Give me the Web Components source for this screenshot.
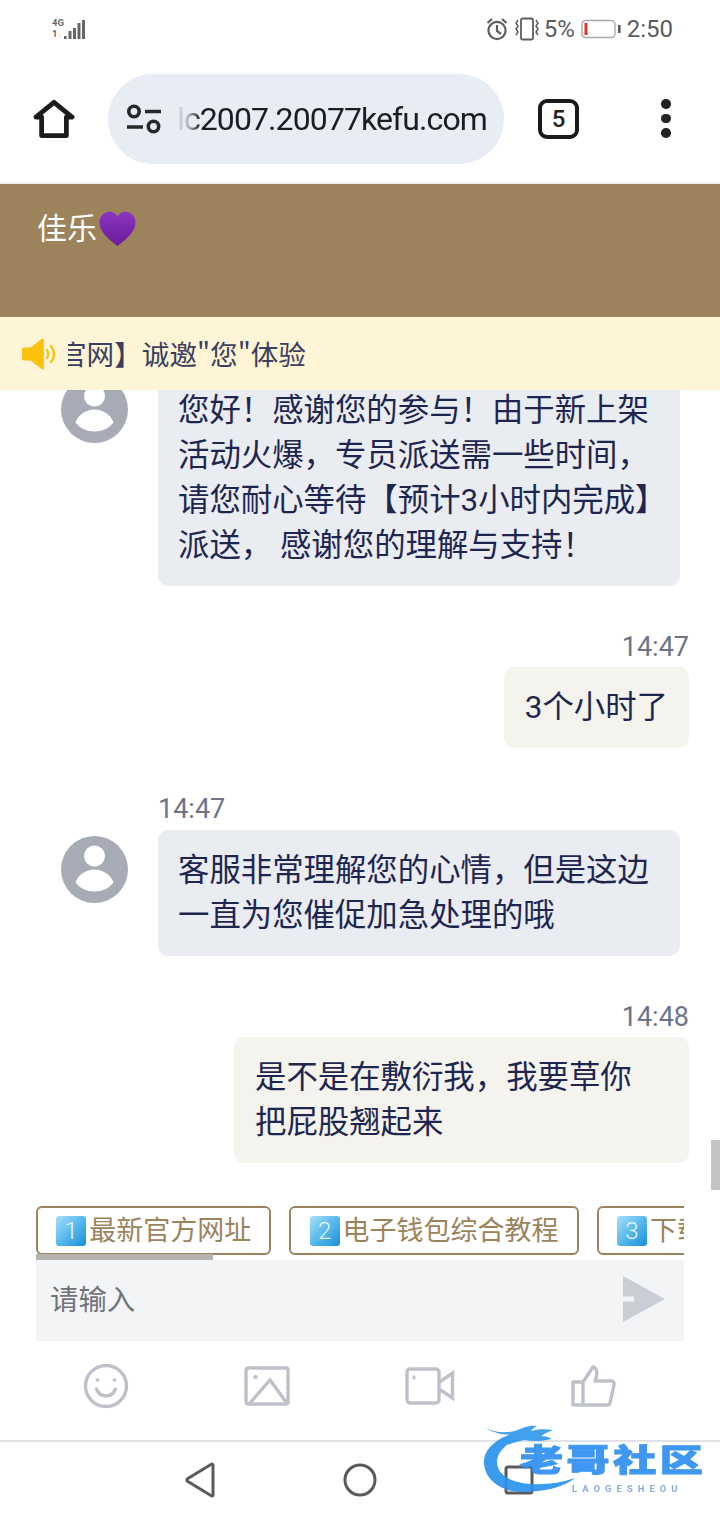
<!DOCTYPE html>
<html lang="zh">
<head>
<meta charset="utf-8">
<title>客服</title>
<style>
  html, body { margin: 0; padding: 0; background: #fff; }
  body {
    width: 720px;
    height: 1520px;
    overflow: hidden;
    position: relative;
    display: flex;
    flex-direction: column;
    font-family: Roboto, "Noto Sans CJK SC", sans-serif;
  }
</style>
</head>
<body>
  <phone-status></phone-status>
  <browser-bar url="lc2007.20077kefu.com" tabs="5"></browser-bar>
  <chat-header name="佳乐"></chat-header>
  <notice-bar text="官网】诚邀&quot;您&quot;体验"></notice-bar>
  <message-list>
    <chat-message side="left" class="first">您好！感谢您的参与！由于新上架活动火爆，专员派送需一些时间，请您耐心等待【预计3小时内完成】派送， 感谢您的理解与支持！</chat-message>
    <chat-message side="right" time="14:47">3个小时了</chat-message>
    <chat-message side="left" time="14:47">客服非常理解您的心情，但是这边一直为您催促加急处理的哦</chat-message>
    <chat-message side="right" time="14:48" wide>是不是在敷衍我，我要草你<br>把屁股翘起来</chat-message>
  </message-list>
  <quick-tray>
    <quick-chip num="1">最新官方网址</quick-chip>
    <quick-chip num="2">电子钱包综合教程</quick-chip>
    <quick-chip num="3">下载教程</quick-chip>
  </quick-tray>
  <chat-input placeholder="请输入"></chat-input>
  <chat-tools></chat-tools>
  <nav-keys></nav-keys>
  <site-mark></site-mark>

<script>
class PhoneStatus extends HTMLElement {
    constructor() {
        super();
        this.attachShadow({ mode: 'open' });
        this.shadowRoot.innerHTML = `
        <style>
        :host {
            display: flex;
            flex: 0 0 58px;
            height: 58px;
            align-items: center;
            justify-content: space-between;
            box-sizing: border-box;
            padding: 0 47px 0 52px;
            color: #5c5c5c;
            font-family: Roboto, sans-serif;
        }
        .signal { display: flex; align-items: flex-end; gap: 0; height: 22px; margin-bottom: 2px; }
        .net { display: flex; flex-direction: column; width: 12px; font-size: 9.5px; line-height: 11px; font-weight: 700; color: #666; }
        .right { display: flex; align-items: center; height: 26px; font-size: 24px; }
        svg { display: block; }
        .pct { margin: 0 6px 0 5px; font-size: 24px; }
        .time { margin-left: 6px; }
        </style>
        <div class="signal">
            <div class="net"><span>4G</span><span>1<span style="opacity:.3">↓</span></span></div>
            <svg width="21" height="20" viewBox="0 0 21 20" fill="#666">
                <rect x="0" y="17" width="2.6" height="3"/>
                <rect x="4.500" y="12" width="3" height="8"/>
                <rect x="9" y="9" width="3" height="11"/>
                <rect x="13.500" y="4" width="3" height="16"/>
                <rect x="18" y="1" width="3" height="19"/>
            </svg>
        </div>
        <div class="right">
            <svg width="22" height="24" viewBox="0 0 22 24" fill="none" stroke="#5c5c5c" stroke-width="2.2">
                <circle cx="11" cy="13.500" r="8.600"/>
                <path d="M11 8v6l4 3M1.500 6 6 2M20.500 6 16 2"/>
            </svg>
            <svg width="24" height="26" viewBox="0 0 24 26" fill="none" stroke="#5c5c5c" stroke-width="1.800" style="margin-left:7px">
                <rect x="6" y="2.500" width="12" height="21" rx="1.500"/>
                <path d="M3 4 1 7l2 3-2 3 2 3-2 3M21 4l2 3-2 3 2 3-2 3 2 3" stroke-width="1.500"/>
            </svg>
            <span class="pct">5%</span>
            <svg width="40" height="20" viewBox="0 0 40 20" fill="none">
                <rect x="1" y="1.500" width="33" height="17" rx="3.500" stroke="#a9a9a9" stroke-width="1.400"/>
                <rect x="3.500" y="4" width="3" height="12" fill="#d8352c"/>
                <rect x="37" y="6" width="2.600" height="8" fill="#5c5c5c"/>
            </svg>
            <span class="time">2:50</span>
        </div>
        `;
    }
}

class BrowserBar extends HTMLElement {
    constructor() {
        super();
        this.attachShadow({ mode: 'open' });
        this.shadowRoot.innerHTML = `
        <style>
        :host {
            display: flex;
            flex: 0 0 126px;
            height: 126px;
            box-sizing: border-box;
            align-items: flex-start;
            padding: 16px 0 0 33px;
            border-bottom: 2px solid #f1f1f1;
            font-family: Roboto, sans-serif;
        }
        svg { display: block; }
        .home { margin: 25px 33px 0 0; }
        .pill {
            display: flex;
            align-items: center;
            width: 396px;
            height: 90px;
            border-radius: 45px;
            background: #e8ecf4;
            box-sizing: border-box;
            padding-left: 18px;
        }
        .url {
            width: 309px;
            margin-left: 16px;
            overflow: hidden;
            direction: rtl;
            font-size: 32px;
            letter-spacing: -0.9px;
            white-space: nowrap;
            color: #1d1d1f;
            -webkit-mask-image: linear-gradient(90deg, rgba(0,0,0,.1) 0, rgba(0,0,0,.25) 10px, #000 22px);
            mask-image: linear-gradient(90deg, rgba(0,0,0,.1) 0, rgba(0,0,0,.25) 10px, #000 22px);
        }
        .tabs {
            box-sizing: border-box;
            width: 41px;
            height: 40px;
            margin: 25px 0 0 34px;
            border: 4.500px solid #1a1a1a;
            border-radius: 9px;
            display: flex;
            align-items: center;
            justify-content: center;
            font-size: 24px;
            font-weight: 500;
            color: #222;
        }
        .more { margin: 25px 0 0 82px; display: flex; flex-direction: column; gap: 5px; }
        .more i { width: 9.500px; height: 9.500px; border-radius: 50%; background: #222; display: block; }
        </style>
        <svg class="home" width="42" height="40" viewBox="0 0 44 42" fill="none" stroke="#1c1c1c" stroke-width="5" stroke-linejoin="round">
            <path d="M9 38.500V19H3L22 3.500 41 19h-6v19.500z"/>
        </svg>
        <div class="pill">
            <svg width="36" height="30" viewBox="0 0 36 30" fill="none" stroke="#26282c" stroke-width="3.600">
                <circle cx="8" cy="7.500" r="5.200"/>
                <path d="M19 7.500h16M1 23h16"/>
                <circle cx="27.500" cy="22.500" r="5.200"/>
            </svg>
            <div class="url"><bdi>${this.getAttribute('url')}</bdi></div>
        </div>
        <div class="tabs">${this.getAttribute('tabs')}</div>
        <div class="more"><i></i><i></i><i></i></div>
        `;
    }
}

class ChatHeader extends HTMLElement {
    constructor() {
        super();
        this.attachShadow({ mode: 'open' });
        this.shadowRoot.innerHTML = `
        <style>
        :host {
            display: flex;
            flex: 0 0 133px;
            height: 133px;
            box-sizing: border-box;
            background: #9c835b;
            padding: 26px 0 0 37px;
            align-items: flex-start;
            color: #fff;
            font: 30px/38px Roboto, "Noto Sans CJK SC", sans-serif;
        }
        svg { display: block; margin: 1px 0 0 2px; }
        </style>
        <span>${this.getAttribute('name')}</span>
        <svg width="37" height="36" viewBox="0 0 37 36">
            <defs><linearGradient id="h" x1="0" y1="0" x2="0" y2="1"><stop offset="0" stop-color="#8a35c0"/><stop offset="1" stop-color="#6a1b9a"/></linearGradient></defs>
            <path d="M18.500 35C8 27 .5 20 .5 11.500 .5 5 5.300 .8 10.600 .8c3.400 0 6.300 1.700 7.900 4.700C20.100 2.500 23 .8 26.400 .8 31.700 .8 36.500 5 36.500 11.500 36.500 20 29 27 18.500 35z" fill="url(#h)"/>
        </svg>
        `;
    }
}

class NoticeBar extends HTMLElement {
    constructor() {
        super();
        this.attachShadow({ mode: 'open' });
        this.shadowRoot.innerHTML = `
        <style>
        :host {
            display: flex;
            flex: 0 0 73px;
            height: 73px;
            align-items: center;
            box-sizing: border-box;
            padding-left: 22px;
            background: #fef5d6;
            position: relative;
            z-index: 1;
        }
        svg { display: block; flex: none; }
        .track { margin: 0 0 2px 9px; overflow: hidden; flex: 1; }
        .text {
            display: block;
            margin-left: -9px;
            white-space: nowrap;
            color: #3b3e5e;
            font: 27.6px/40px "Noto Sans CJK SC", sans-serif;
        }
        </style>
        <svg width="37" height="32" viewBox="0 0 37 32" fill="#fbc20d">
            <path d="M0 11.500C0 10 1 9.500 2 9.500h6.500L20 .8c.8-.6 1.800 0 1.800 1V30.200c0 1-1 1.600-1.800 1L8.500 22.500H2C1 22.500 0 22 0 20.500z"/>
            <path d="M25 10.500c3 3 3 8 0 11l-1.300-1.500c2-2.300 2-5.700 0-8z"/>
            <path d="M29 6.500c5.500 5 5.500 14 0 19l-1.500-1.500c4.300-4.200 4.300-11.800 0-16z"/>
        </svg>
        <div class="track"><span class="text">${this.getAttribute('text')}</span></div>
        `;
    }
}

class MessageList extends HTMLElement {
    constructor() {
        super();
        this.attachShadow({ mode: 'open' });
        this.shadowRoot.innerHTML = `
        <style>
        :host {
            display: block;
            flex: 0 0 800px;
            height: 800px;
            overflow: hidden;
            position: relative;
        }
        .rows { display: flex; flex-direction: column; gap: 45px; margin-top: -20px; }
        .thumb {
            position: absolute;
            right: 0;
            top: 750px;
            width: 9px;
            height: 50px;
            background: #c4c4c4;
        }
        </style>
        <div class="rows"><slot></slot></div>
        <div class="thumb"></div>
        `;
    }
}

class ChatMessage extends HTMLElement {
    constructor() {
        super();
        this.attachShadow({ mode: 'open' });
        const side = this.getAttribute('side');
        const time = this.getAttribute('time');
        this.shadowRoot.innerHTML = `
        <style>
        :host {
            display: flex;
            font: 31.4px/45px Roboto, "Noto Sans CJK SC", sans-serif;
            color: #1e2650;
        }
        :host([side="left"]) { padding-left: 61px; gap: 30px; }
        :host([side="right"]) { justify-content: flex-end; padding-right: 31px; }
        .avatar { flex: none; width: 67px; height: 67px; margin-top: 6px; }
        :host([time]) .avatar { margin-top: 43px; }
        .body { display: flex; flex-direction: column; }
        :host([side="left"]) .body { width: 522px; align-items: flex-start; }
        :host([side="right"]) .body { width: 455px; align-items: flex-end; }
        .time { font-size: 27px; line-height: 32px; color: #6e7488; }
        :host([side="left"]) .time { margin-bottom: 5px; }
        :host([side="right"]) .time { margin-bottom: 4px; }
        .bubble {
            box-sizing: border-box;
            padding: 18px 20px;
            border-radius: 10px;
            background: #e9ecf0;
        }
        :host([side="left"]) .bubble, :host([wide]) .bubble { width: 100%; }
        :host([side="right"]) .bubble { background: #f5f3ee; padding: 18px 21px; }
        </style>
        ${side === 'left' ? `
        <svg class="avatar" viewBox="0 0 67 67">
            <circle cx="33.500" cy="33.500" r="33.500" fill="#a6abb6"/>
            <circle cx="33.500" cy="20" r="10.500" fill="#fff"/>
            <path d="M14.500 46.500C17 39 25 33.500 33.500 33.500S50 39 52.500 46.500C48 52.500 41 55.500 33.500 55.500S19 52.500 14.500 46.500z" fill="#fff"/>
        </svg>` : ''}
        <div class="body">
            ${time ? `<div class="time">${time}</div>` : ''}
            <div class="bubble"><slot></slot></div>
        </div>
        `;
    }
}

class QuickTray extends HTMLElement {
    constructor() {
        super();
        this.attachShadow({ mode: 'open' });
        this.shadowRoot.innerHTML = `
        <style>
        :host {
            display: block;
            flex: 0 0 70px;
            height: 70px;
            box-sizing: border-box;
            margin: 0 36px;
            padding-top: 16px;
            overflow: hidden;
            position: relative;
        }
        .row { display: flex; gap: 18px; width: 900px; }
        .thumb {
            position: absolute;
            left: 0;
            bottom: 0;
            width: 177px;
            height: 6px;
            background: #b5b1ac;
        }
        </style>
        <div class="row"><slot></slot></div>
        <div class="thumb"></div>
        `;
    }
}

class QuickChip extends HTMLElement {
    constructor() {
        super();
        this.attachShadow({ mode: 'open' });
        this.shadowRoot.innerHTML = `
        <style>
        :host {
            display: flex;
            flex: none;
            align-items: center;
            box-sizing: border-box;
            height: 49px;
            padding: 0 18.2px;
            border: 2px solid #9c835b;
            border-radius: 6px;
            background: #fff;
            color: #9c835b;
            font: 27px/40px "Noto Sans CJK SC", sans-serif;
        }
        .key {
            flex: none;
            box-sizing: border-box;
            width: 30px;
            height: 30px;
            margin-right: 3px;
            border-radius: 3px;
            background: linear-gradient(135deg, #a8e0f8 0, #57b9ec 50%, #1b8fd6 100%);
            color: #e9f7fd;
            font: 300 24px/30px Roboto, sans-serif;
            text-align: center;
        }
        .label { margin-bottom: 3px; }
        </style>
        <span class="key">${this.getAttribute('num')}</span><span class="label"><slot></slot></span>
        `;
    }
}

class ChatInput extends HTMLElement {
    constructor() {
        super();
        this.attachShadow({ mode: 'open' });
        this.shadowRoot.innerHTML = `
        <style>
        :host {
            display: flex;
            flex: 0 0 81px;
            height: 81px;
            align-items: center;
            justify-content: space-between;
            box-sizing: border-box;
            margin: 0 36px;
            padding: 0 19px 0 15px;
            background: #f3f4f6;
            color: #71737b;
            font: 28.4px/40px "Noto Sans CJK SC", sans-serif;
        }
        span { margin: 0 0 5px -1px; }
        svg { display: block; margin-bottom: 3px; }
        </style>
        <span>${this.getAttribute('placeholder')}</span>
        <svg width="42" height="46" viewBox="0 0 42 46" fill="#c9cdd6">
            <path d="M0 0 42 23 0 46V25.500H11V20.500H0z"/>
        </svg>
        `;
    }
}

class ChatTools extends HTMLElement {
    constructor() {
        super();
        this.attachShadow({ mode: 'open' });
        this.shadowRoot.innerHTML = `
        <style>
        :host {
            display: flex;
            flex: 0 0 101px;
            height: 101px;
            align-items: center;
            box-sizing: border-box;
            padding: 0 0 9px 83px;
            gap: 115px;
            border-bottom: 2px solid #e1e2e5;
        }
        svg { display: block; flex: none; fill: none; stroke: #bec1ca; stroke-width: 3.400; }
        </style>
        <svg width="46" height="46" viewBox="0 0 46 46">
            <circle cx="23" cy="23" r="20.500"/>
            <path d="M13.500 26c2 5 5.500 7 9.500 7s7.500-2 9.500-7" stroke-linecap="round"/>
            <circle cx="14.500" cy="17" r="1.400" fill="#bec1ca" stroke-width="1"/>
            <circle cx="31.500" cy="17" r="1.400" fill="#bec1ca" stroke-width="1"/>
        </svg>
        <svg width="46" height="40" viewBox="0 0 46 40">
            <rect x="2" y="2" width="42" height="36" rx="2"/>
            <path d="M6 37 26 14l16 22"/>
            <circle cx="11.500" cy="11" r="1.800" fill="#bec1ca" stroke-width="1"/>
        </svg>
        <svg width="50" height="38" viewBox="0 0 50 38">
            <rect x="2" y="2" width="32" height="34" rx="3"/>
            <path d="M34 15.500 47.500 6v25L34 22"/>
            <rect x="8" y="9" width="2" height="3" fill="#bec1ca" stroke-width="1"/>
        </svg>
        <svg width="46" height="42" viewBox="0 0 46 42">
            <path d="M13 17h-10v23h10zM13 17 23 2c5 1 4.500 8 2 14h16c2.500 0 3.500 2 3 4l-4 18c-.4 1.400-1.500 2-3 2H13z" stroke-linejoin="round"/>
        </svg>
        `;
    }
}

class NavKeys extends HTMLElement {
    constructor() {
        super();
        this.attachShadow({ mode: 'open' });
        this.shadowRoot.innerHTML = `
        <style>
        :host {
            display: flex;
            flex: 1 1 auto;
            align-items: flex-start;
            box-sizing: border-box;
            padding: 20px 0 0 185px;
            gap: 127px;
        }
        svg { display: block; fill: none; stroke: #5a5a5a; stroke-width: 3; flex: none; }
        </style>
        <svg width="31" height="36" viewBox="0 0 31 36">
            <path d="M28 3v30c0 1-1 1.300-1.700.7L2.500 19.300c-.8-.7-.8-1.800 0-2.500L26.300 2.300C27 1.700 28 2 28 3z" stroke-linejoin="round"/>
        </svg>
        <svg width="34" height="34" viewBox="0 0 34 34" style="margin-top:1px">
            <circle cx="17" cy="17" r="15"/>
        </svg>
        <svg width="30" height="30" viewBox="0 0 30 30" style="margin-top:3px">
            <rect x="2" y="2" width="26" height="26" rx="2"/>
        </svg>
        `;
    }
}

// watermark stamped over the bottom right corner
class SiteMark extends HTMLElement {
    constructor() {
        super();
        this.attachShadow({ mode: 'open' });
        this.shadowRoot.innerHTML = `
        <style>
        :host {
            display: block;
            position: absolute;
            left: 480px;
            top: 1422px;
            width: 226px;
            height: 76px;
            filter: blur(.6px);
            opacity: .92;
        }
        svg { position: absolute; left: 0; top: 0; }
        .name {
            position: absolute;
            left: 40px;
            top: 20px;
            white-space: nowrap;
            font: 900 43px/43px "Noto Sans CJK SC", sans-serif;
            letter-spacing: 3.6px;
            -webkit-text-stroke: 1.5px #2f8ff0;
            color: #2f8ff0;
            transform: scale(1, .72);
            transform-origin: 0 0;
        }
        .sub {
            position: absolute;
            left: 92px;
            top: 61px;
            white-space: nowrap;
            font: 700 9.500px/12px Roboto, sans-serif;
            letter-spacing: 5px;
            color: #7ea6d8;
        }
        </style>
        <svg width="226" height="76" viewBox="0 0 226 76">
            <path d="M42 9C18 14 4 26 4 40c0 18 18 30 38 30 22 0 42-5 53-14-14 5-30 7-44 6C30 61 17 52 17 40c0-10 9-19 26-26z" fill="#2a93ee"/>
            <path d="M3 5c12 6 22 6 32 4 8-3 14-6 22-5-3 2-5 3-6 5 7-2 14-2 22-1-5 2-9 4-12 6 4 0 8 1 11 3-9 2-18 3-28 1-4 1-12 3-16 5 2-5 4-8 7-11C28 14 15 12 3 5z" fill="#3498ee"/>
        </svg>
        <span class="name">老哥社区</span>
        <span class="sub">LAOGESHEOU</span>
        `;
    }
}

customElements.define('phone-status', PhoneStatus);
customElements.define('browser-bar', BrowserBar);
customElements.define('chat-header', ChatHeader);
customElements.define('notice-bar', NoticeBar);
customElements.define('message-list', MessageList);
customElements.define('chat-message', ChatMessage);
customElements.define('quick-tray', QuickTray);
customElements.define('quick-chip', QuickChip);
customElements.define('chat-input', ChatInput);
customElements.define('chat-tools', ChatTools);
customElements.define('nav-keys', NavKeys);
customElements.define('site-mark', SiteMark);
</script>
</body>
</html>
